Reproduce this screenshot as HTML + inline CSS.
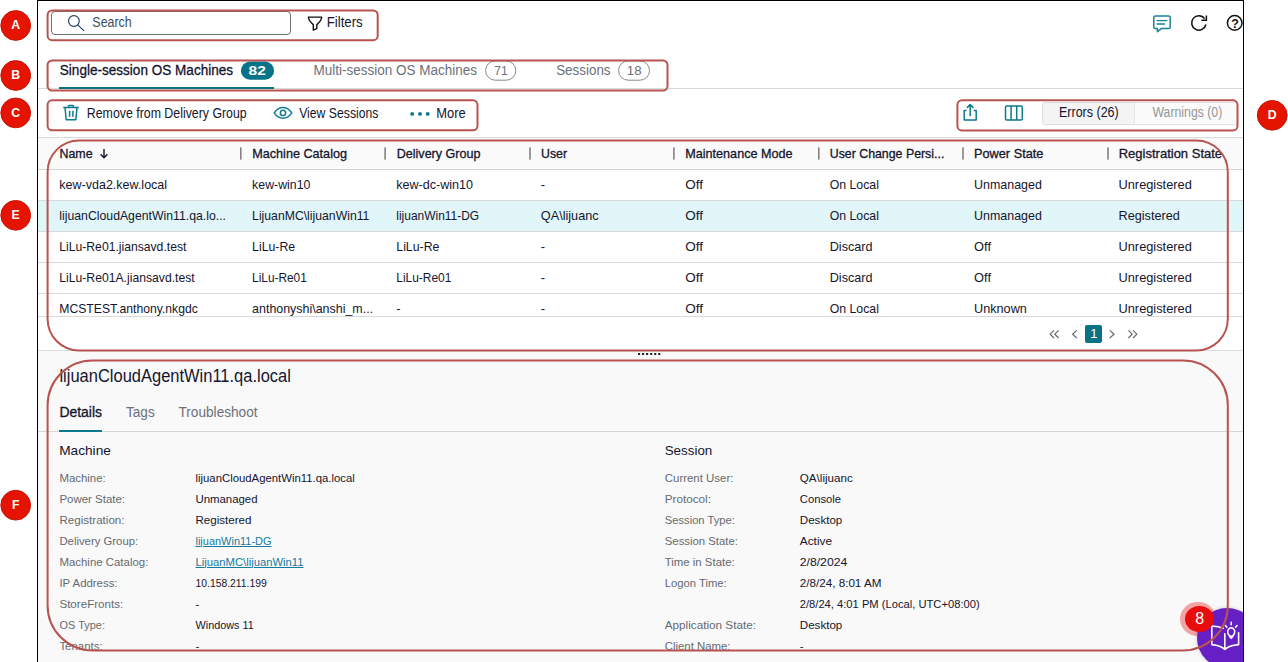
<!DOCTYPE html>
<html lang="en"><head><meta charset="utf-8"><title>Machines</title>
<style>
html,body{margin:0;padding:0;background:#fff;}
body{width:1288px;height:662px;position:relative;overflow:hidden;font-family:"Liberation Sans",sans-serif;color:#15152d;}
.a{position:absolute;box-sizing:border-box;}
.t{position:absolute;white-space:nowrap;transform-origin:0 0;}
svg{position:absolute;overflow:visible;}
.rr{position:absolute;box-sizing:border-box;border:1.7px solid #b85450;}
.dot{position:absolute;width:30px;height:30px;border-radius:50%;background:#e51400;color:#fff;font-weight:700;font-size:12px;line-height:30px;text-align:center;}
</style></head><body>
<div class="a" style="left:38px;top:1px;width:1205px;height:661px;background:#fff;"></div>
<div class="a" style="left:38px;top:88px;width:1205px;height:1px;background:#d9d9d9;"></div>
<div class="a" style="left:38px;top:137px;width:1205px;height:1px;background:#d9d9d9;"></div>
<div class="a" style="left:38px;top:138px;width:1205px;height:31px;background:#fafafa;"></div>
<div class="a" style="left:38px;top:169px;width:1205px;height:1px;background:#d4d4d4;"></div>
<div class="a" style="left:38px;top:201px;width:1205px;height:30px;background:#e0f6f8;"></div>
<div class="a" style="left:38px;top:200px;width:1205px;height:1px;background:#d9d9d9;"></div>
<div class="a" style="left:38px;top:231px;width:1205px;height:1px;background:#d9d9d9;"></div>
<div class="a" style="left:38px;top:262px;width:1205px;height:1px;background:#d9d9d9;"></div>
<div class="a" style="left:38px;top:293px;width:1205px;height:1px;background:#d9d9d9;"></div>
<div class="a" style="left:38px;top:316px;width:1205px;height:1px;background:#d9d9d9;"></div>
<div class="a" style="left:38px;top:351px;width:1205px;height:311px;background:#f9f9f9;"></div>
<div class="a" style="left:38px;top:350px;width:1205px;height:1px;background:#dcdcdc;"></div>
<div class="a" style="left:38px;top:431px;width:1205px;height:1px;background:#d6d6d6;"></div>
<div class="a" style="left:59px;top:430px;width:43px;height:2px;background:#0b7a8c;"></div>
<div class="a" style="left:51px;top:11px;width:240px;height:24px;border:1px solid #707070;border-radius:4px;background:#fff;"></div>
<svg style="left:66px;top:13px" width="20" height="20" viewBox="66 13 20 20"><circle cx="73.9" cy="21" r="5.35" fill="none" stroke="#1f3f5f" stroke-width="1.15"/><path d="M77.7 24.8 L83.8 30.6" stroke="#1f3f5f" stroke-width="1.15" fill="none" stroke-linecap="round"/></svg>
<span class="t" style="left:92px;top:14px;font-size:14px;line-height:16px;transform:translateX(0.34px) scaleX(0.8886);color:#3a4c62;">Search</span>
<svg style="left:305px;top:14px" width="20" height="20" viewBox="305 14 20 20"><path d="M308.4 17.1 H321.7 C321.7 20.6 319.4 22.4 316.8 24.6 V28.6 L313.3 30.1 V24.6 C310.7 22.4 308.4 20.6 308.4 17.1 Z" fill="none" stroke="#111" stroke-width="1.4" stroke-linejoin="round"/></svg>
<span class="t" style="left:326px;top:14px;font-size:14px;line-height:16px;transform:translateX(0.74px) scaleX(0.9425);">Filters</span>
<svg style="left:1150px;top:12px" width="24" height="24" viewBox="1150 12 24 24"><path d="M1155.4 16 H1168.6 Q1170.2 16 1170.2 17.6 V27 Q1170.2 28.6 1168.6 28.6 H1161.2 L1157.4 31.8 V28.6 H1155.4 Q1153.8 28.6 1153.8 27 V17.6 Q1153.8 16 1155.4 16 Z" fill="none" stroke="#1a8296" stroke-width="1.5" stroke-linejoin="round"/><path d="M1156.6 20.6 H1167.4 M1156.6 24 H1165" stroke="#1a8296" stroke-width="1.4" fill="none"/></svg>
<svg style="left:1188px;top:12px" width="24" height="24" viewBox="1188 12 24 24"><path d="M1205.9 24.5 A7.2 7.2 0 1 1 1204.6 18.6" fill="none" stroke="#111" stroke-width="1.5"/><path d="M1206.4 15.4 V20.2 H1201.4" fill="none" stroke="#111" stroke-width="1.5"/></svg>
<svg style="left:1224px;top:12px" width="24" height="24" viewBox="1224 12 24 24"><circle cx="1234.7" cy="22.9" r="7.3" fill="none" stroke="#111" stroke-width="1.5"/></svg>
<span class="t" style="left:1231px;top:17px;font-size:12.5px;line-height:14px;transform:translateX(0.28px) scaleX(1.0000);color:#111;font-weight:700;">?</span>
<span class="t" style="left:59px;top:62px;font-size:14px;line-height:16px;transform:translateX(0.79px) scaleX(0.9682);-webkit-text-stroke:0.3px;">Single-session OS Machines</span>
<svg style="left:240px;top:60px" width="36" height="22" viewBox="240 60 36 22"><rect x="240.9" y="61.5" width="33.2" height="18.3" rx="9.15" fill="#077389"/></svg>
<span class="t" style="left:248px;top:63px;font-size:13.5px;line-height:15px;transform:translateX(0.93px) scaleX(1.0000);color:#fff;font-weight:700;transform:translateX(0.6px) scaleX(1.15);">82</span>
<div class="a" style="left:59px;top:87px;width:215px;height:2px;background:#0a7285;"></div>
<span class="t" style="left:313px;top:62px;font-size:14px;line-height:16px;transform:translateX(0.52px) scaleX(0.9637);color:#6c7079;">Multi-session OS Machines</span>
<svg style="left:484px;top:59px" width="34" height="23" viewBox="484 59 34 23"><rect x="485.6" y="60.9" width="30.2" height="19.3" rx="9.6" fill="#fff" stroke="#85888d" stroke-width="1"/></svg>
<span class="t" style="left:494px;top:63px;font-size:13.5px;line-height:15px;transform:translateX(0.35px) scaleX(0.8873);color:#6c7079;">71</span>
<span class="t" style="left:556px;top:62px;font-size:14px;line-height:16px;transform:translateX(0.15px) scaleX(0.9573);color:#6c7079;">Sessions</span>
<svg style="left:617px;top:59px" width="35" height="23" viewBox="617 59 35 23"><rect x="618.6" y="60.9" width="30.9" height="19.3" rx="9.6" fill="#fff" stroke="#85888d" stroke-width="1"/></svg>
<span class="t" style="left:626px;top:63px;font-size:13.5px;line-height:15px;transform:translateX(0.82px) scaleX(0.9794);color:#6c7079;">18</span>
<svg style="left:61px;top:103px" width="20" height="20" viewBox="61 103 20 20"><path d="M63.2 107.6 H78.8 M68.4 107.4 V106.6 Q68.4 105.6 69.4 105.6 H72.6 Q73.6 105.6 73.6 106.6 V107.4 M65 107.8 L66.2 119.8 H75.8 L77 107.8" fill="none" stroke="#0e7a8c" stroke-width="1.5" stroke-linejoin="round"/><path d="M69.6 110.8 V116.8 M72.9 110.8 V116.8" stroke="#0e7a8c" stroke-width="1.5" fill="none"/></svg>
<span class="t" style="left:86px;top:105px;font-size:14px;line-height:16px;transform:translateX(0.81px) scaleX(0.8821);">Remove from Delivery Group</span>
<svg style="left:272px;top:104px" width="22" height="18" viewBox="272 104 22 18"><path d="M274.2 112.9 C277 108.8 280 107.6 283 107.6 C286 107.6 289 108.8 291.8 112.9 C289 117 286 118.2 283 118.2 C280 118.2 277 117 274.2 112.9 Z" fill="none" stroke="#0e7a8c" stroke-width="1.5" stroke-linejoin="round"/><circle cx="283" cy="112.9" r="2.6" fill="none" stroke="#0e7a8c" stroke-width="1.5"/></svg>
<span class="t" style="left:299px;top:105px;font-size:14px;line-height:16px;transform:translateX(0.14px) scaleX(0.8738);">View Sessions</span>
<svg style="left:408px;top:110px" width="24" height="8" viewBox="408 110 24 8"><circle cx="412.2" cy="113.9" r="1.95" fill="#0e7a8c"/><circle cx="420" cy="113.9" r="1.95" fill="#0e7a8c"/><circle cx="427.7" cy="113.9" r="1.95" fill="#0e7a8c"/></svg>
<span class="t" style="left:436px;top:105px;font-size:14px;line-height:16px;transform:translateX(0.27px) scaleX(0.9195);">More</span>
<svg style="left:960px;top:102px" width="20" height="22" viewBox="960 102 20 22"><path d="M966.6 110.4 H964.2 V120 H976.2 V110.4 H973.8 M970.2 116.2 V104.8 M966.9 107.9 L970.2 104.6 L973.5 107.9" fill="none" stroke="#0e7a8c" stroke-width="1.5" stroke-linejoin="round"/></svg>
<svg style="left:1002px;top:103px" width="24" height="20" viewBox="1002 103 24 20"><rect x="1005.5" y="105.9" width="16.8" height="14.2" rx="1.3" fill="none" stroke="#0e7a8c" stroke-width="1.5"/><path d="M1011.1 106 V120 M1016.7 106 V120" stroke="#0e7a8c" stroke-width="1.5"/></svg>
<div class="a" style="left:1042px;top:101.5px;width:93px;height:23px;background:#f4f4f4;border:1px solid #dedede;border-radius:3px 0 0 3px;"></div>
<div class="a" style="left:1134px;top:101.5px;width:104px;height:23px;background:#fbfbfb;border:1px solid #e3e3e3;border-radius:0 3px 3px 0;"></div>
<span class="t" style="left:1058px;top:104px;font-size:14px;line-height:16px;transform:translateX(1.00px) scaleX(0.8925);">Errors (26)</span>
<span class="t" style="left:1152px;top:104px;font-size:14px;line-height:16px;transform:translateX(0.49px) scaleX(0.8763);color:#969696;">Warnings (0)</span>
<svg style="left:0;top:140px" width="1288" height="30" viewBox="0 140 1288 30"><g fill="#838383"><rect x="240.00" y="147.4" width="1.6" height="12.2"/><rect x="384.30" y="147.4" width="1.6" height="12.2"/><rect x="529.20" y="147.4" width="1.6" height="12.2"/><rect x="673.10" y="147.4" width="1.6" height="12.2"/><rect x="818.00" y="147.4" width="1.6" height="12.2"/><rect x="962.20" y="147.4" width="1.6" height="12.2"/><rect x="1107.20" y="147.4" width="1.6" height="12.2"/></g></svg>
<span class="t" style="left:59px;top:146px;font-size:13px;line-height:15px;transform:translateX(0.44px) scaleX(0.9545);-webkit-text-stroke:0.3px;">Name</span>
<svg style="left:98px;top:147px" width="12" height="13" viewBox="98 147 12 13"><path d="M104 149 V157.6 M100.6 154.2 L104 157.7 L107.4 154.2" fill="none" stroke="#15152d" stroke-width="1.4"/></svg>
<span class="t" style="left:252px;top:146px;font-size:13px;line-height:15px;transform:translateX(0.22px) scaleX(0.9714);-webkit-text-stroke:0.3px;">Machine Catalog</span>
<span class="t" style="left:396px;top:146px;font-size:13px;line-height:15px;transform:translateX(0.73px) scaleX(0.9656);-webkit-text-stroke:0.3px;">Delivery Group</span>
<span class="t" style="left:541px;top:146px;font-size:13px;line-height:15px;transform:translateX(0.04px) scaleX(0.9456);-webkit-text-stroke:0.3px;">User</span>
<span class="t" style="left:685px;top:146px;font-size:13px;line-height:15px;transform:translateX(0.22px) scaleX(0.9707);-webkit-text-stroke:0.3px;">Maintenance Mode</span>
<span class="t" style="left:829px;top:146px;font-size:13px;line-height:15px;transform:translateX(0.74px) scaleX(0.9495);-webkit-text-stroke:0.3px;">User Change Persi...</span>
<span class="t" style="left:974px;top:146px;font-size:13px;line-height:15px;transform:translateX(0.02px) scaleX(0.9792);-webkit-text-stroke:0.3px;">Power State</span>
<span class="t" style="left:1118px;top:146px;font-size:13px;line-height:15px;transform:translateX(0.70px) scaleX(1.0005);-webkit-text-stroke:0.3px;">Registration State</span>
<span class="t" style="left:59px;top:177px;font-size:13px;line-height:15px;transform:translateX(0.30px) scaleX(0.9624);">kew-vda2.kew.local</span>
<span class="t" style="left:252px;top:177px;font-size:13px;line-height:15px;transform:translateX(0.10px) scaleX(0.9492);">kew-win10</span>
<span class="t" style="left:396px;top:177px;font-size:13px;line-height:15px;transform:translateX(0.30px) scaleX(0.9646);">kew-dc-win10</span>
<span class="t" style="left:540px;top:177px;font-size:13px;line-height:15px;transform:translateX(0.80px) scaleX(1.0000);">-</span>
<span class="t" style="left:685px;top:177px;font-size:13px;line-height:15px;transform:translateX(0.20px) scaleX(1.0394);">Off</span>
<span class="t" style="left:829px;top:177px;font-size:13px;line-height:15px;transform:translateX(0.70px) scaleX(0.9447);">On Local</span>
<span class="t" style="left:974px;top:177px;font-size:13px;line-height:15px;transform:translateX(0.10px) scaleX(0.9557);">Unmanaged</span>
<span class="t" style="left:1118px;top:177px;font-size:13px;line-height:15px;transform:translateX(0.50px) scaleX(0.9847);">Unregistered</span>
<span class="t" style="left:59px;top:208px;font-size:13px;line-height:15px;transform:translateX(0.30px) scaleX(0.9428);">lijuanCloudAgentWin11.qa.lo...</span>
<span class="t" style="left:252px;top:208px;font-size:13px;line-height:15px;transform:translateX(0.10px) scaleX(0.9398);">LijuanMC\lijuanWin11</span>
<span class="t" style="left:396px;top:208px;font-size:13px;line-height:15px;transform:translateX(0.30px) scaleX(0.9195);">lijuanWin11-DG</span>
<span class="t" style="left:540px;top:208px;font-size:13px;line-height:15px;transform:translateX(0.80px) scaleX(0.9758);">QA\lijuanc</span>
<span class="t" style="left:685px;top:208px;font-size:13px;line-height:15px;transform:translateX(0.20px) scaleX(1.0394);">Off</span>
<span class="t" style="left:829px;top:208px;font-size:13px;line-height:15px;transform:translateX(0.70px) scaleX(0.9447);">On Local</span>
<span class="t" style="left:974px;top:208px;font-size:13px;line-height:15px;transform:translateX(0.10px) scaleX(0.9557);">Unmanaged</span>
<span class="t" style="left:1118px;top:208px;font-size:13px;line-height:15px;transform:translateX(0.50px) scaleX(0.9758);">Registered</span>
<span class="t" style="left:59px;top:239px;font-size:13px;line-height:15px;transform:translateX(0.30px) scaleX(0.9352);">LiLu-Re01.jiansavd.test</span>
<span class="t" style="left:252px;top:239px;font-size:13px;line-height:15px;transform:translateX(0.10px) scaleX(0.9448);">LiLu-Re</span>
<span class="t" style="left:396px;top:239px;font-size:13px;line-height:15px;transform:translateX(0.30px) scaleX(0.9460);">LiLu-Re</span>
<span class="t" style="left:540px;top:239px;font-size:13px;line-height:15px;transform:translateX(0.80px) scaleX(1.0000);">-</span>
<span class="t" style="left:685px;top:239px;font-size:13px;line-height:15px;transform:translateX(0.20px) scaleX(1.0394);">Off</span>
<span class="t" style="left:829px;top:239px;font-size:13px;line-height:15px;transform:translateX(0.70px) scaleX(0.9723);">Discard</span>
<span class="t" style="left:974px;top:239px;font-size:13px;line-height:15px;transform:translateX(0.10px) scaleX(0.9869);">Off</span>
<span class="t" style="left:1118px;top:239px;font-size:13px;line-height:15px;transform:translateX(0.50px) scaleX(0.9847);">Unregistered</span>
<span class="t" style="left:59px;top:270px;font-size:13px;line-height:15px;transform:translateX(0.30px) scaleX(0.9365);">LiLu-Re01A.jiansavd.test</span>
<span class="t" style="left:252px;top:270px;font-size:13px;line-height:15px;transform:translateX(0.10px) scaleX(0.9120);">LiLu-Re01</span>
<span class="t" style="left:396px;top:270px;font-size:13px;line-height:15px;transform:translateX(0.30px) scaleX(0.9171);">LiLu-Re01</span>
<span class="t" style="left:540px;top:270px;font-size:13px;line-height:15px;transform:translateX(0.80px) scaleX(1.0000);">-</span>
<span class="t" style="left:685px;top:270px;font-size:13px;line-height:15px;transform:translateX(0.20px) scaleX(1.0394);">Off</span>
<span class="t" style="left:829px;top:270px;font-size:13px;line-height:15px;transform:translateX(0.70px) scaleX(0.9723);">Discard</span>
<span class="t" style="left:974px;top:270px;font-size:13px;line-height:15px;transform:translateX(0.10px) scaleX(0.9869);">Off</span>
<span class="t" style="left:1118px;top:270px;font-size:13px;line-height:15px;transform:translateX(0.50px) scaleX(0.9847);">Unregistered</span>
<span class="t" style="left:59px;top:301px;font-size:13px;line-height:15px;transform:translateX(0.30px) scaleX(0.9369);">MCSTEST.anthony.nkgdc</span>
<span class="t" style="left:252px;top:301px;font-size:13px;line-height:15px;transform:translateX(0.10px) scaleX(0.9563);">anthonyshi\anshi_m...</span>
<span class="t" style="left:396px;top:301px;font-size:13px;line-height:15px;transform:translateX(0.30px) scaleX(1.0000);">-</span>
<span class="t" style="left:540px;top:301px;font-size:13px;line-height:15px;transform:translateX(0.80px) scaleX(1.0000);">-</span>
<span class="t" style="left:685px;top:301px;font-size:13px;line-height:15px;transform:translateX(0.20px) scaleX(1.0394);">Off</span>
<span class="t" style="left:829px;top:301px;font-size:13px;line-height:15px;transform:translateX(0.70px) scaleX(0.9447);">On Local</span>
<span class="t" style="left:974px;top:301px;font-size:13px;line-height:15px;transform:translateX(0.10px) scaleX(0.9724);">Unknown</span>
<span class="t" style="left:1118px;top:301px;font-size:13px;line-height:15px;transform:translateX(0.50px) scaleX(0.9847);">Unregistered</span>
<svg style="left:1046px;top:326px" width="96" height="16" viewBox="1046 326 96 16"><g fill="none" stroke="#666a70" stroke-width="1.2"><path d="M1054 330.4 L1050.2 334.2 L1054 338 M1058.6 330.4 L1054.8 334.2 L1058.6 338"/><path d="M1076.8 330.4 L1072.6 334.2 L1076.8 338"/><path d="M1109.8 330.4 L1114 334.2 L1109.8 338"/><path d="M1128.4 330.4 L1132.2 334.2 L1128.4 338 M1133 330.4 L1136.8 334.2 L1133 338"/></g></svg>
<div class="a" style="left:1085px;top:325px;width:17px;height:18px;background:#0a7285;border-radius:2px;"></div>
<span class="t" style="left:1090px;top:326px;font-size:13px;line-height:15px;transform:translateX(0.30px) scaleX(1.0000);color:#fff;">1</span>
<svg style="left:636px;top:351px" width="26" height="6" viewBox="636 351 26 6"><g fill="#222"><rect x="638.00" y="353" width="2.1" height="2"/><rect x="642.04" y="353" width="2.1" height="2"/><rect x="646.08" y="353" width="2.1" height="2"/><rect x="650.12" y="353" width="2.1" height="2"/><rect x="654.16" y="353" width="2.1" height="2"/><rect x="658.20" y="353" width="2.1" height="2"/></g></svg>
<span class="t" style="left:59px;top:366px;font-size:17.5px;line-height:20px;transform:translateX(0.44px) scaleX(0.9417);">lijuanCloudAgentWin11.qa.local</span>
<span class="t" style="left:59px;top:404px;font-size:14px;line-height:16px;transform:translateX(0.38px) scaleX(0.9970);-webkit-text-stroke:0.3px;">Details</span>
<span class="t" style="left:126px;top:404px;font-size:14px;line-height:16px;transform:translateX(0.01px) scaleX(0.9697);color:#6c7079;">Tags</span>
<span class="t" style="left:178px;top:404px;font-size:14px;line-height:16px;transform:translateX(0.51px) scaleX(0.9737);color:#6c7079;">Troubleshoot</span>
<span class="t" style="left:59px;top:443px;font-size:13.5px;line-height:15px;transform:translateX(0.16px) scaleX(1.0132);">Machine</span>
<span class="t" style="left:664px;top:443px;font-size:13.5px;line-height:15px;transform:translateX(0.68px) scaleX(0.9914);">Session</span>
<span class="t" style="left:59px;top:472px;font-size:11.5px;line-height:12px;transform:translateX(0.40px) scaleX(0.9929);color:#666a70;">Machine:</span>
<span class="t" style="left:59px;top:493px;font-size:11.5px;line-height:12px;transform:translateX(0.40px) scaleX(0.9969);color:#666a70;">Power State:</span>
<span class="t" style="left:59px;top:514px;font-size:11.5px;line-height:12px;transform:translateX(0.40px) scaleX(1.0087);color:#666a70;">Registration:</span>
<span class="t" style="left:59px;top:535px;font-size:11.5px;line-height:12px;transform:translateX(0.40px) scaleX(0.9864);color:#666a70;">Delivery Group:</span>
<span class="t" style="left:59px;top:556px;font-size:11.5px;line-height:12px;transform:translateX(0.40px) scaleX(0.9935);color:#666a70;">Machine Catalog:</span>
<span class="t" style="left:59px;top:577px;font-size:11.5px;line-height:12px;transform:translateX(0.40px) scaleX(0.9922);color:#666a70;">IP Address:</span>
<span class="t" style="left:59px;top:598px;font-size:11.5px;line-height:12px;transform:translateX(0.40px) scaleX(1.0088);color:#666a70;">StoreFronts:</span>
<span class="t" style="left:59px;top:619px;font-size:11.5px;line-height:12px;transform:translateX(0.40px) scaleX(0.9555);color:#666a70;">OS Type:</span>
<span class="t" style="left:59px;top:640px;font-size:11.5px;line-height:12px;transform:translateX(0.40px) scaleX(0.9923);color:#666a70;">Tenants:</span>
<span class="t" style="left:195px;top:472px;font-size:11.5px;line-height:12px;transform:translateX(0.50px) scaleX(0.9860);">lijuanCloudAgentWin11.qa.local</span>
<span class="t" style="left:195px;top:493px;font-size:11.5px;line-height:12px;transform:translateX(0.50px) scaleX(0.9899);">Unmanaged</span>
<span class="t" style="left:195px;top:514px;font-size:11.5px;line-height:12px;transform:translateX(0.50px) scaleX(1.0068);">Registered</span>
<span class="t" style="left:195px;top:535px;font-size:11.5px;line-height:12px;transform:translateX(0.50px) scaleX(0.9540);color:#15799f;text-decoration:underline;text-underline-offset:1px;text-decoration-thickness:1px;">lijuanWin11-DG</span>
<span class="t" style="left:195px;top:556px;font-size:11.5px;line-height:12px;transform:translateX(0.50px) scaleX(0.9784);color:#15799f;text-decoration:underline;text-underline-offset:1px;text-decoration-thickness:1px;">LijuanMC\lijuanWin11</span>
<span class="t" style="left:195px;top:577px;font-size:11.5px;line-height:12px;transform:translateX(0.50px) scaleX(0.8998);">10.158.211.199</span>
<span class="t" style="left:195px;top:598px;font-size:11.5px;line-height:12px;transform:translateX(0.50px) scaleX(1.0000);">-</span>
<span class="t" style="left:195px;top:619px;font-size:11.5px;line-height:12px;transform:translateX(0.50px) scaleX(0.9429);">Windows 11</span>
<span class="t" style="left:195px;top:640px;font-size:11.5px;line-height:12px;transform:translateX(0.50px) scaleX(1.0000);">-</span>
<span class="t" style="left:664px;top:472px;font-size:11.5px;line-height:12px;transform:translateX(0.75px) scaleX(0.9949);color:#666a70;">Current User:</span>
<span class="t" style="left:664px;top:493px;font-size:11.5px;line-height:12px;transform:translateX(0.75px) scaleX(1.0175);color:#666a70;">Protocol:</span>
<span class="t" style="left:664px;top:514px;font-size:11.5px;line-height:12px;transform:translateX(0.75px) scaleX(0.9739);color:#666a70;">Session Type:</span>
<span class="t" style="left:664px;top:535px;font-size:11.5px;line-height:12px;transform:translateX(0.75px) scaleX(0.9867);color:#666a70;">Session State:</span>
<span class="t" style="left:664px;top:556px;font-size:11.5px;line-height:12px;transform:translateX(0.75px) scaleX(0.9914);color:#666a70;">Time in State:</span>
<span class="t" style="left:664px;top:577px;font-size:11.5px;line-height:12px;transform:translateX(0.75px) scaleX(0.9783);color:#666a70;">Logon Time:</span>
<span class="t" style="left:664px;top:619px;font-size:11.5px;line-height:12px;transform:translateX(0.75px) scaleX(1.0190);color:#666a70;">Application State:</span>
<span class="t" style="left:664px;top:640px;font-size:11.5px;line-height:12px;transform:translateX(0.75px) scaleX(0.9889);color:#666a70;">Client Name:</span>
<span class="t" style="left:799px;top:472px;font-size:11.5px;line-height:12px;transform:translateX(0.75px) scaleX(1.0120);">QA\lijuanc</span>
<span class="t" style="left:799px;top:493px;font-size:11.5px;line-height:12px;transform:translateX(0.75px) scaleX(0.9790);">Console</span>
<span class="t" style="left:799px;top:514px;font-size:11.5px;line-height:12px;transform:translateX(0.75px) scaleX(1.0090);">Desktop</span>
<span class="t" style="left:799px;top:535px;font-size:11.5px;line-height:12px;transform:translateX(0.75px) scaleX(1.0325);">Active</span>
<span class="t" style="left:799px;top:556px;font-size:11.5px;line-height:12px;transform:translateX(0.75px) scaleX(1.0618);">2/8/2024</span>
<span class="t" style="left:799px;top:577px;font-size:11.5px;line-height:12px;transform:translateX(0.75px) scaleX(1.0141);">2/8/24, 8:01 AM</span>
<span class="t" style="left:799px;top:598px;font-size:11.5px;line-height:12px;transform:translateX(0.75px) scaleX(0.9722);">2/8/24, 4:01 PM (Local, UTC+08:00)</span>
<span class="t" style="left:799px;top:619px;font-size:11.5px;line-height:12px;transform:translateX(0.75px) scaleX(1.0090);">Desktop</span>
<span class="t" style="left:799px;top:640px;font-size:11.5px;line-height:12px;transform:translateX(0.75px) scaleX(1.0000);">-</span>
<div class="a" style="left:1180px;top:601.6px;width:35.6px;height:34.4px;border-radius:50%;background:#f4a3a3;"></div>
<div class="a" style="left:38px;top:590px;width:1205px;height:72px;overflow:hidden;"><div class="a" style="left:1159px;top:18px;width:60px;height:60px;border-radius:50%;background:#651fc4;box-shadow:0 0 4px rgba(0,0,0,.18);"></div></div>
<svg style="left:1205px;top:615px" width="40" height="40" viewBox="1205 615 40 40"><g fill="none" stroke="#fff" stroke-width="1.6" stroke-linejoin="round" stroke-linecap="round"><path d="M1224.8 633.8 V649.4 M1224.8 649.4 C1222 646.6 1218 645.2 1211.8 644.6 V626 C1216 626.3 1220 627 1223.2 628.2 M1224.8 649.4 C1227.6 646.6 1231.6 645.2 1238.6 644.6 V632.8"/><path d="M1229.7 635.7 C1227.5 634.2 1227.2 631.2 1228.4 629.4 C1229.8 627.3 1232.6 627.3 1234 629.4 C1235.2 631.2 1234.9 634.2 1232.7 635.7 V636.8 L1231.2 638.3 L1229.7 636.8 Z"/><path d="M1229.9 636.4 H1232.5" stroke-width="1.6"/><path d="M1231.2 622.2 V624.8 M1225.4 625.5 L1226.8 627.2 M1237 625.5 L1235.6 627.2"/></g></svg>
<div class="a" style="left:1184.9px;top:605.9px;width:29.1px;height:26px;border-radius:50%;background:#e80c0c;"></div>
<span class="t" style="left:1195px;top:610px;font-size:16px;line-height:17px;transform:translateX(0.17px) scaleX(1.0000);color:#fff;">8</span>
<svg style="left:0;top:0" width="1288" height="662" viewBox="0 0 1288 662"><g fill="none" stroke="#b85450" stroke-width="2"><rect x="47.6" y="10.4" width="330.10" height="29.80" rx="4.5" ry="4.5"/><rect x="47.6" y="60.4" width="619.90" height="30.20" rx="4.5" ry="4.5"/><rect x="47.6" y="100.3" width="429.90" height="30.00" rx="4.5" ry="4.5"/><rect x="957.4" y="100.3" width="280.10" height="30.10" rx="4.5" ry="4.5"/><rect x="47.6" y="140.4" width="1180.20" height="210.00" rx="31.5" ry="31.5"/><rect x="47.6" y="360.4" width="1180.20" height="290.00" rx="45" ry="45"/></g><circle cx="15.7" cy="25.5" r="14.9" fill="#e51400" stroke="#c40e00" stroke-width="0.9"/><text x="15.7" y="29.2" text-anchor="middle" font-family="Liberation Sans, sans-serif" font-weight="700" font-size="12.3" fill="#fff">A</text><circle cx="15.7" cy="75.5" r="14.9" fill="#e51400" stroke="#c40e00" stroke-width="0.9"/><text x="15.7" y="79.2" text-anchor="middle" font-family="Liberation Sans, sans-serif" font-weight="700" font-size="12.3" fill="#fff">B</text><circle cx="15.7" cy="112.9" r="14.9" fill="#e51400" stroke="#c40e00" stroke-width="0.9"/><text x="15.7" y="116.6" text-anchor="middle" font-family="Liberation Sans, sans-serif" font-weight="700" font-size="12.3" fill="#fff">C</text><circle cx="15.7" cy="215.3" r="14.9" fill="#e51400" stroke="#c40e00" stroke-width="0.9"/><text x="15.7" y="219.0" text-anchor="middle" font-family="Liberation Sans, sans-serif" font-weight="700" font-size="12.3" fill="#fff">E</text><circle cx="15.7" cy="505.2" r="14.9" fill="#e51400" stroke="#c40e00" stroke-width="0.9"/><text x="15.7" y="508.9" text-anchor="middle" font-family="Liberation Sans, sans-serif" font-weight="700" font-size="12.3" fill="#fff">F</text><circle cx="1272.2" cy="115.3" r="14.9" fill="#e51400" stroke="#c40e00" stroke-width="0.9"/><text x="1272.2" y="119.0" text-anchor="middle" font-family="Liberation Sans, sans-serif" font-weight="700" font-size="12.3" fill="#fff">D</text></svg>
<div class="a" style="left:37px;top:0px;width:1207px;height:663px;border:1px solid #000;border-bottom:none;"></div>
</body></html>
